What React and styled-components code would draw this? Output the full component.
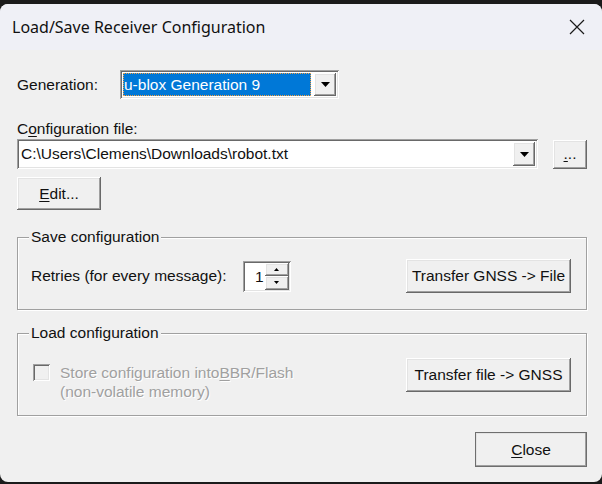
import styled, { createGlobalStyle, css } from 'styled-components';

const GlobalStyle = createGlobalStyle`
  html, body {
    margin: 0;
    padding: 0;
    background: #1b1b1b;
  }
  body {
    width: 602px;
    height: 484px;
    overflow: hidden;
  }
`;

// classic win32 bevels
const raised = css`
  background: #f0f0f0;
  border: none;
  box-shadow: inset -1px -1px 0 #696969, inset 1px 1px 0 #ffffff,
    inset -2px -2px 0 #a0a0a0, inset 2px 2px 0 #e3e3e3;
`;

const sunken = css`
  box-shadow: inset 1px 1px 0 #a0a0a0, inset -1px -1px 0 #ffffff,
    inset 2px 2px 0 #696969, inset -2px -2px 0 #e3e3e3;
`;

const Screen = styled.div`
  width: 602px;
  height: 484px;
  padding-top: 4px;
  box-sizing: border-box;
  background: #1b1b1b;
`;

const Window = styled.div`
  width: 602px;
  height: 478px;
  border-radius: 8px;
  overflow: hidden;
  background: #f0f0f0;
  display: flex;
  flex-direction: column;
  font-family: 'Liberation Sans', Arial, sans-serif;
  font-size: 15.5px;
  color: #111;
`;

const TitleBar = styled.div`
  height: 46px;
  flex: none;
  background: #eff0f6;
  display: flex;
  align-items: center;
  justify-content: space-between;
  padding: 0 17px 0 12px;
`;

const Title = styled.span`
  font-family: 'Noto Sans', sans-serif;
  font-size: 16px;
  color: #111;
`;

const Body = styled.div`
  flex: 1;
  display: flex;
  flex-direction: column;
  padding: 20px 15px 0 17px;
`;

const Row = styled.div`
  display: flex;
  align-items: center;
  gap: ${(p) => p.$gap || 0}px;
  margin-top: ${(p) => p.$top || 0}px;
`;

const Label = styled.span`
  width: ${(p) => (p.$w ? `${p.$w}px` : 'auto')};
  line-height: 18px;
  flex: none;
`;

const FieldLabel = styled.div`
  line-height: 18px;
  margin-top: 21px;
`;

const U = styled.span`
  text-decoration: underline;
  text-underline-offset: 2px;
`;

const Combo = styled.div`
  width: ${(p) => p.$w}px;
  height: ${(p) => p.$h}px;
  box-sizing: border-box;
  background: #fff;
  ${sunken};
  padding: 3px;
  display: flex;
  gap: 3px;
  flex: none;
`;

const ComboText = styled.div`
  flex: 1;
  display: flex;
  align-items: center;
  padding-left: 1px;
  line-height: 18px;
  white-space: nowrap;
  ${(p) =>
    p.$selected &&
    css`
      background: #0078d7;
      color: #fff;
      outline: 1px dotted #f5a040;
      outline-offset: -1px;
    `}
`;

const DropButton = styled.div`
  ${raised};
  width: 22px;
  flex: none;
  display: flex;
  align-items: center;
  justify-content: center;
`;

const Button = styled.button`
  ${raised};
  width: ${(p) => p.$w}px;
  height: ${(p) => p.$h}px;
  flex: none;
  padding: 0;
  font-family: inherit;
  font-size: inherit;
  color: #111;
  display: flex;
  align-items: center;
  justify-content: center;
  ${(p) =>
    p.$default &&
    css`
      outline: 1px solid #6e6e6e;
      outline-offset: -1px;
    `}
`;

const Group = styled.fieldset`
  margin: ${(p) => p.$top}px 0 0 0;
  padding: 0;
  border: 1px solid #a0a0a0;
  box-shadow: inset 1px 1px 0 #fff, 1px 1px 0 #fff;
  min-width: 0;
`;

const Legend = styled.legend`
  margin-left: 11px;
  padding: 0 2px;
  line-height: 18px;
  background: #f0f0f0;
`;

const GroupRow = styled.div`
  display: flex;
  justify-content: space-between;
  align-items: ${(p) => p.$align || 'center'};
  padding: ${(p) => p.$pad};
`;

const Spinner = styled.div`
  width: 48px;
  height: 31px;
  box-sizing: border-box;
  background: #fff;
  ${sunken};
  padding: 2px;
  display: flex;
`;

const SpinValue = styled.div`
  flex: 1;
  text-align: right;
  padding-right: 1px;
  line-height: 27px;
`;

const SpinButtons = styled.div`
  width: 24px;
  display: flex;
  flex-direction: column;
`;

const SpinButton = styled.div`
  ${raised};
  flex: 1;
  display: flex;
  align-items: center;
  justify-content: center;
`;

const CheckWrap = styled.div`
  display: flex;
  gap: 10px;
  margin-top: 5px;
  margin-left: 15px;
`;

const CheckBox = styled.div`
  width: 17px;
  height: 17px;
  box-sizing: border-box;
  background: #f0f0f0;
  ${sunken};
  flex: none;
  margin-top: 1px;
`;

const Disabled = styled.div`
  color: #a0a0a0;
  text-shadow: 1px 1px 0 #fff;
  line-height: 19px;
`;

const Footer = styled.div`
  display: flex;
  justify-content: flex-end;
  margin-top: 16px;
`;

const Arrow = ({ up, w = 9, h = 5 }) => (
  <svg width={w} height={h} viewBox={`0 0 ${w} ${h}`}>
    <polygon
      points={up ? `0,${h} ${w / 2},0 ${w},${h}` : `0,0 ${w},0 ${w / 2},${h}`}
      fill="#000"
    />
  </svg>
);

const CloseIcon = () => (
  <svg width="16" height="16" viewBox="0 0 16 16">
    <path d="M1 1 L15 15 M15 1 L1 15" stroke="#1a1a1a" strokeWidth="1.2" />
  </svg>
);

export default function App() {
  return (
    <Screen>
      <GlobalStyle />
      <Window>
        <TitleBar>
          <Title>Load/Save Receiver Configuration</Title>
          <CloseIcon />
        </TitleBar>
        <Body>
          <Row>
            <Label $w={103}>Generation:</Label>
            <Combo $w={219} $h={29}>
              <ComboText $selected>u-blox Generation 9</ComboText>
              <DropButton>
                <Arrow />
              </DropButton>
            </Combo>
          </Row>

          <FieldLabel>
            C<U>o</U>nfiguration file:
          </FieldLabel>
          <Row $top={1} $gap={15}>
            <Combo $w={521} $h={30}>
              <ComboText>C:\Users\Clemens\Downloads\robot.txt</ComboText>
              <DropButton>
                <Arrow />
              </DropButton>
            </Combo>
            <Button $w={34} $h={29}>
              <U>.</U>..
            </Button>
          </Row>
          <Row $top={8}>
            <Button $w={84} $h={33}>
              <U>E</U>dit...
            </Button>
          </Row>

          <Group $top={18}>
            <Legend>Save configuration</Legend>
            <GroupRow $pad="13px 15px 16px 13px">
              <Row $gap={16}>
                <Label>Retries (for every message):</Label>
                <Spinner>
                  <SpinValue>1</SpinValue>
                  <SpinButtons>
                    <SpinButton>
                      <Arrow up w={5} h={3} />
                    </SpinButton>
                    <SpinButton>
                      <Arrow w={5} h={3} />
                    </SpinButton>
                  </SpinButtons>
                </Spinner>
              </Row>
              <Button $w={165} $h={34}>
                Transfer GNSS -&gt; File
              </Button>
            </GroupRow>
          </Group>

          <Group $top={14}>
            <Legend>Load configuration</Legend>
            <GroupRow $align="flex-start" $pad="16px 15px 14px 0">
              <CheckWrap>
                <CheckBox />
                <Disabled>
                  Store configuration into<U>B</U>BR/Flash
                  <br />
                  (non-volatile memory)
                </Disabled>
              </CheckWrap>
              <Button $w={165} $h={34}>
                Transfer file -&gt; GNSS
              </Button>
            </GroupRow>
          </Group>

          <Footer>
            <Button $w={112} $h={35} $default>
              <U>C</U>lose
            </Button>
          </Footer>
        </Body>
      </Window>
    </Screen>
  );
}
